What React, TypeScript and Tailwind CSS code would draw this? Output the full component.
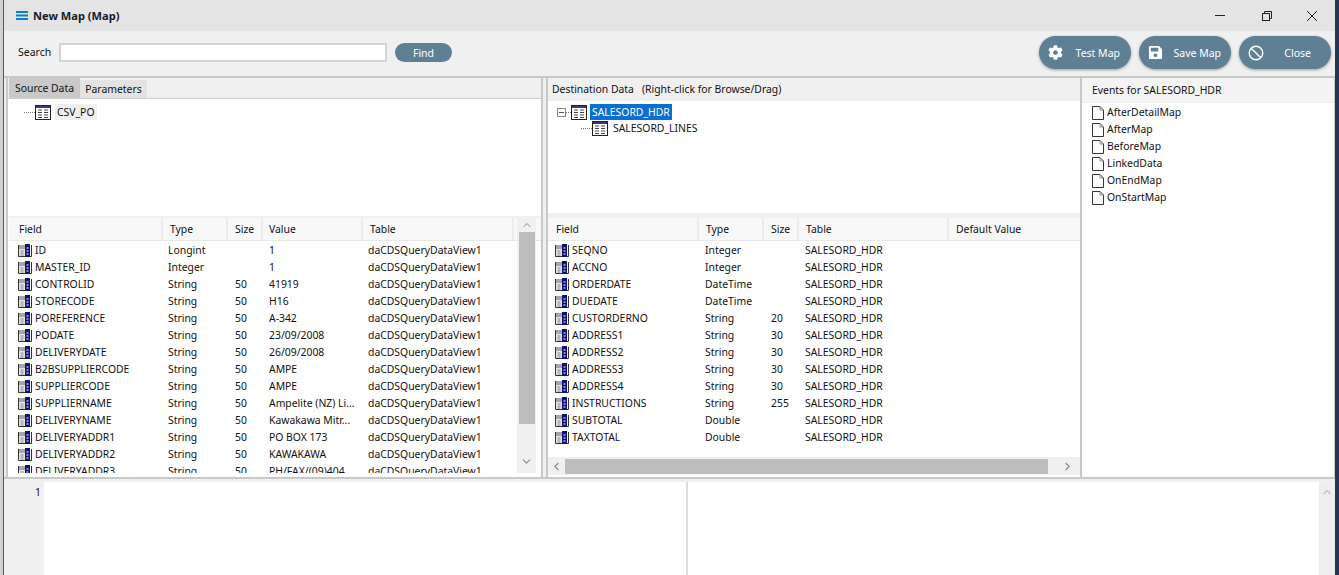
import { FaCog, FaSave } from 'react-icons/fa';
import { ChevronUp, ChevronDown, ChevronLeft, ChevronRight } from 'lucide-react';

const SOURCE_ROWS = [
  ['ID', 'Longint', '', '1'],
  ['MASTER_ID', 'Integer', '', '1'],
  ['CONTROLID', 'String', '50', '41919'],
  ['STORECODE', 'String', '50', 'H16'],
  ['POREFERENCE', 'String', '50', 'A-342'],
  ['PODATE', 'String', '50', '23/09/2008'],
  ['DELIVERYDATE', 'String', '50', '26/09/2008'],
  ['B2BSUPPLIERCODE', 'String', '50', 'AMPE'],
  ['SUPPLIERCODE', 'String', '50', 'AMPE'],
  ['SUPPLIERNAME', 'String', '50', 'Ampelite (NZ) Li...'],
  ['DELIVERYNAME', 'String', '50', 'Kawakawa Mitr...'],
  ['DELIVERYADDR1', 'String', '50', 'PO BOX 173'],
  ['DELIVERYADDR2', 'String', '50', 'KAWAKAWA'],
  ['DELIVERYADDR3', 'String', '50', 'PH/FAX/(09)404'],
];

const DEST_ROWS = [
  ['SEQNO', 'Integer', ''],
  ['ACCNO', 'Integer', ''],
  ['ORDERDATE', 'DateTime', ''],
  ['DUEDATE', 'DateTime', ''],
  ['CUSTORDERNO', 'String', '20'],
  ['ADDRESS1', 'String', '30'],
  ['ADDRESS2', 'String', '30'],
  ['ADDRESS3', 'String', '30'],
  ['ADDRESS4', 'String', '30'],
  ['INSTRUCTIONS', 'String', '255'],
  ['SUBTOTAL', 'Double', ''],
  ['TAXTOTAL', 'Double', ''],
];

const EVENTS = ['AfterDetailMap', 'AfterMap', 'BeforeMap', 'LinkedData', 'OnEndMap', 'OnStartMap'];

// small table glyph used in the trees
const TableIcon = () => (
  <svg width="16" height="15" viewBox="0 0 16 15" className="shrink-0">
    <rect x="0.5" y="0.5" width="15" height="14" fill="#fff" stroke="#222" />
    <rect x="1" y="1" width="14" height="2" fill="#3a3a7a" />
    <path d="M3 5h4M9 5h4M3 7.5h4M9 7.5h4M3 10h4M9 10h4M3 12.5h4M9 12.5h4" stroke="#444" strokeWidth="1.2" />
  </svg>
);

// grey + navy field glyph in the grids
const FieldIcon = () => (
  <svg width="14" height="13" viewBox="0 0 14 13" className="shrink-0">
    <rect x="1" y="1" width="6" height="4" fill="#a6a6a6" />
    <rect x="1" y="5" width="6" height="7" fill="#e4e4e4" />
    <path d="M0.5 1V12.5H7" fill="none" stroke="#333" />
    <path d="M2.5 7h3M2.5 9h3M2.5 11h3" stroke="#8a8a8a" />
    <rect x="7" y="0" width="5" height="13" fill="#10107e" />
    <path d="M8.5 4h2M8.5 7h2M8.5 10h2" stroke="#fff" strokeWidth="1.2" />
    <path d="M13.5 1v11.5H12" fill="none" stroke="#333" />
  </svg>
);

const PageIcon = () => (
  <svg width="12" height="14" viewBox="0 0 12 14" className="shrink-0">
    <path d="M0.5 0.5H8L11.5 4V13.5H0.5Z" fill="#fff" stroke="#333" />
    <path d="M8 0.5V4H11.5" fill="none" stroke="#888" />
  </svg>
);

const HeaderCell = ({ label, className }: { label: string; className: string }) => (
  <div className={`flex h-[22px] items-center border-r-2 border-[#ececec] ${className}`}>{label}</div>
);

const ActionButton = ({ icon, label, className }: { icon: React.ReactNode; label: string; className: string }) => (
  <button className={`flex h-[33px] w-[92px] items-center justify-between rounded-full bg-[#5f7f95] pl-[9px] text-[10.5px] text-white shadow-[0_1px_3px_rgba(0,0,0,0.35)] ${className}`}>
    {icon}
    <span className="pt-[2px]">{label}</span>
  </button>
);

export default function App() {
  return (
    <div className="flex h-[575px] w-[1339px] overflow-hidden bg-[#f0f0f0] text-[10.4px] leading-none text-[#111] [font-family:'Noto_Sans',sans-serif]">
      {/* sliver of the desktop behind the window */}
      <div className="h-full w-[3px] shrink-0 bg-[#cfd3d6]" />
      <div className="h-full w-px shrink-0 bg-[#555]" />

      <div className="flex min-w-0 flex-1 flex-col">
        {/* title bar */}
        <div className="flex h-[31px] shrink-0 items-center justify-between bg-[#e4e4e4] pl-[12px]">
          <div className="flex items-center gap-[5px] text-[11.1px] font-bold text-[#1a1a2a]">
            <svg width="12" height="9" viewBox="0 0 12 9">
              <path d="M0 1h12M0 4.5h12M0 8h12" stroke="#0f7cc4" strokeWidth="2" />
            </svg>
            New Map (Map)
          </div>
          <div className="flex items-center pr-[18px]">
            <svg width="10" height="11" viewBox="0 0 10 11" stroke="#222">
              <path d="M0 5.5h10" />
            </svg>
            <svg width="10" height="10" viewBox="0 0 10 10" fill="none" stroke="#222" className="ml-[37px]">
              <rect x="0.5" y="2.5" width="7" height="7" />
              <path d="M2.5 2.5V0.5H9.5V7.5H7.5" />
            </svg>
            <svg width="10" height="10" viewBox="0 0 10 10" fill="none" stroke="#222" className="ml-[35px]">
              <path d="M0 0L10 10M10 0L0 10" />
            </svg>
          </div>
        </div>

        {/* search and actions */}
        <div className="flex h-[45px] shrink-0 items-center justify-between pb-[2px] pl-[14px] pr-[4px]">
          <div className="flex items-center">
            <span className="w-[41px] text-[10.5px]">Search</span>
            <div className="h-[19px] w-[328px] border-2 border-[#d4d4d4] bg-white" />
            <button className="ml-[8px] h-[19px] w-[57px] rounded-full bg-[#5f7f95] pt-px text-[10.5px] text-white">Find</button>
          </div>
          <div className="flex items-center gap-[8px]">
            <ActionButton className="pr-[11px]" label="Test Map" icon={<FaCog size={15} color="#fff" />} />
            <ActionButton className="pr-[10px]" label="Save Map" icon={<FaSave size={15} color="#fff" />} />
            <ActionButton className="pr-[20px]" label="Close" icon={
              <svg width="16" height="16" viewBox="0 0 16 16" fill="none" stroke="#fff" strokeWidth="1.4">
                <circle cx="8" cy="8" r="6.8" />
                <path d="M3.2 3.2L12.8 12.8" />
              </svg>
            } />
          </div>
        </div>

        {/* three panels */}
        <div className="flex h-[403px] shrink-0 border-y-2 border-[#c8c8c8]">
          {/* source */}
          <div className="ml-[2px] flex w-[537px] shrink-0 flex-col border-x-2 border-[#c8c8c8] bg-white">
            <div className="flex h-[21px] shrink-0 items-end border-b border-[#d0d0d0] bg-[#f0f0f0] pl-px">
              <div className="flex h-[20px] w-[71px] items-center justify-center bg-[#c9c9c9]">Source Data</div>
              <div className="flex h-[18px] w-[67px] items-center justify-center bg-[#e3e3e3]">Parameters</div>
            </div>
            <div className="h-[117px] shrink-0 pl-[16px] pt-[5px]">
              <div className="flex h-[16px] items-center">
                <div className="w-[11px] border-t border-dotted border-[#777]" />
                <TableIcon />
                <span className="ml-[4px] flex h-[16px] items-center bg-[#f0f0f0] px-[2px]">CSV_PO</span>
              </div>
            </div>
            <div className="flex min-h-0 flex-1 flex-col border-t-2 border-[#f0f0f0] pl-[1px]">
              <div className="flex shrink-0 border-b border-[#e8e8e8] bg-[#f8f8f8]">
                <HeaderCell label="Field" className="w-[154px] pl-[10px]" />
                <HeaderCell label="Type" className="w-[65px] pl-[7px]" />
                <HeaderCell label="Size" className="w-[35px] pl-[7px]" />
                <HeaderCell label="Value" className="w-[100px] pl-[6px]" />
                <HeaderCell label="Table" className="w-[151px] pl-[7px]" />
              </div>
              <div className="flex min-h-0 flex-1">
                <div className="mb-[4px] min-h-0 flex-1 overflow-hidden pt-px">
                  {SOURCE_ROWS.map(([field, type, size, value]) => (
                    <div key={field} className="flex h-[17px] items-center">
                      <div className="flex w-[154px] items-center gap-[3px] pl-[9px]"><FieldIcon />{field}</div>
                      <div className="w-[65px] pl-[5px]">{type}</div>
                      <div className="w-[35px] pl-[7px]">{size}</div>
                      <div className="w-[100px] pl-[6px]">{value}</div>
                      <div className="pl-[5px]">daCDSQueryDataView1</div>
                    </div>
                  ))}
                </div>
                <div className="-mt-[23px] mb-[4px] mr-[5px] flex w-[19px] shrink-0 flex-col items-center bg-[#f0f0f0] text-[#888]">
                  <ChevronUp size={12} className="my-px" />
                  <div className="h-[192px] w-[16px] bg-[#bdbdbd]" />
                  <div className="flex-1" />
                  <ChevronDown size={13} className="my-[5px]" />
                </div>
              </div>
            </div>
          </div>

          <div className="w-[3px] shrink-0" />

          {/* destination */}
          <div className="flex w-[536px] shrink-0 flex-col border-x-2 border-[#c8c8c8] bg-white">
            <div className="flex h-[23px] shrink-0 items-center gap-[8px] bg-[#f0f0f0] pl-[4px]">
              <span>Destination Data</span>
              <span>(Right-click for Browse/Drag)</span>
            </div>
            <div className="h-[112px] shrink-0 bg-white pl-[9px] pt-[3px]">
              <div className="flex h-[16px] items-center">
                <div className="flex h-[9px] w-[9px] items-center justify-center border border-[#888]">
                  <div className="h-px w-[5px] bg-[#555]" />
                </div>
                <div className="w-[5px] border-t border-dotted border-[#777]" />
                <TableIcon />
                <span className="ml-[3px] flex h-[16px] items-center bg-[#0a6fd0] px-[2px] text-white">SALESORD_HDR</span>
              </div>
              <div className="flex h-[16px] items-center pl-[24px]">
                <div className="w-[11px] border-t border-dotted border-[#777]" />
                <TableIcon />
                <span className="ml-[5px]">SALESORD_LINES</span>
              </div>
            </div>
            <div className="flex min-h-0 flex-1 flex-col border-t-[5px] border-[#f0f0f0]">
              <div className="flex shrink-0 border-b border-[#e8e8e8] bg-[#f8f8f8]">
                <HeaderCell label="Field" className="w-[151px] pl-[8px]" />
                <HeaderCell label="Type" className="w-[65px] pl-[7px]" />
                <HeaderCell label="Size" className="w-[35px] pl-[7px]" />
                <HeaderCell label="Table" className="w-[150px] pl-[7px]" />
                <div className="flex h-[22px] flex-1 items-center pl-[7px]">Default Value</div>
              </div>
              <div className="min-h-0 flex-1 overflow-hidden pt-px">
                {DEST_ROWS.map(([field, type, size]) => (
                  <div key={field} className="flex h-[17px] items-center">
                    <div className="flex w-[151px] items-center gap-[3px] pl-[7px]"><FieldIcon />{field}</div>
                    <div className="w-[65px] pl-[6px]">{type}</div>
                    <div className="w-[35px] pl-[7px]">{size}</div>
                    <div className="pl-[6px]">SALESORD_HDR</div>
                  </div>
                ))}
              </div>
              <div className="mb-[2px] flex h-[18px] shrink-0 items-center bg-[#f0f0f0] text-[#888]">
                <ChevronLeft size={13} className="mx-[2px] shrink-0" />
                <div className="h-[15px] w-[483px] bg-[#bdbdbd]" />
                <div className="flex-1" />
                <ChevronRight size={13} className="mx-[6px] shrink-0" />
              </div>
            </div>
          </div>

          {/* events */}
          <div className="flex flex-1 flex-col border-r border-[#c8c8c8] bg-white">
            <div className="flex h-[25px] shrink-0 items-center border-b border-[#ececec] bg-[#f4f4f4] pl-[10px]">Events for SALESORD_HDR</div>
            <div className="pl-[10px] pt-px">
              {EVENTS.map((name) => (
                <div key={name} className="flex h-[17px] items-center gap-[3px]"><PageIcon />{name}</div>
              ))}
            </div>
          </div>
        </div>

        {/* script editor */}
        <div className="flex min-h-0 flex-1 pt-[3px]">
          <div className="w-[40px] shrink-0 pr-[3px] pt-[5px] text-right">1</div>
          <div className="flex min-w-0 flex-1 bg-white">
            <div className="w-[644px] shrink-0 border-r-2 border-[#dcdcdc]" />
            <div className="flex-1" />
            <div className="flex w-[16px] shrink-0 justify-center bg-[#eeeeee] pt-[4px] text-[#c4c4c4]">
              <ChevronUp size={12} strokeWidth={3} />
            </div>
          </div>
        </div>
      </div>

      {/* sliver of the desktop on the right */}
      <div className="h-full w-[4px] shrink-0 bg-[#24364f]" />
    </div>
  );
}
